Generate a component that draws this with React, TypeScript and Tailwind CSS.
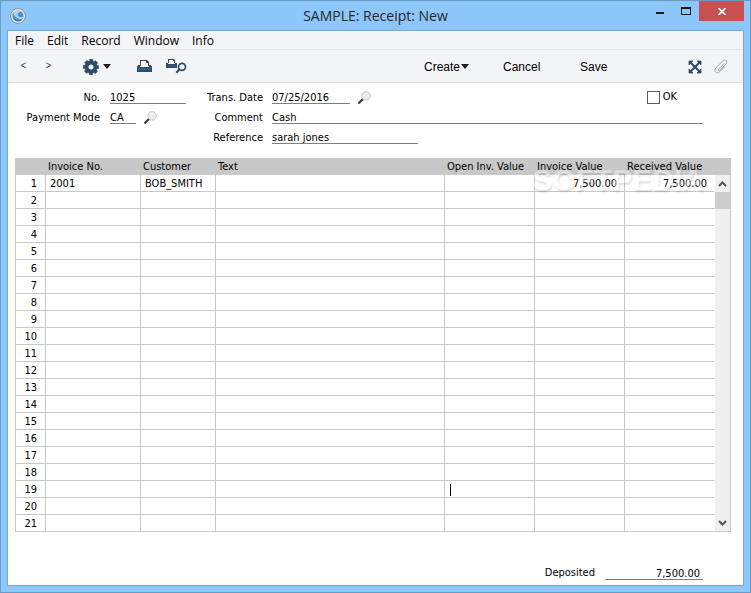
import { useState } from "react";

const MENUS = ["File", "Edit", "Record", "Window", "Info"];

const COLUMNS = ["Invoice No.", "Customer", "Text", "Open Inv. Value", "Invoice Value", "Received Value"];

const ROWS = Array.from({ length: 21 }, (_, i) => ({
  no: i + 1,
  cells: i === 0 ? ["2001", "BOB_SMITH", "", "", "7,500.00", "7,500.00"] : ["", "", "", "", "", ""],
}));

const FIELD = "h-[14px] border-b border-[#808080] bg-transparent p-0 pt-px text-[11px] leading-3 outline-none";

function AppIcon() {
  return (
    <svg width="16" height="16" viewBox="0 0 16 16">
      <circle cx="8" cy="8" r="7.4" fill="#eeebe8" stroke="#8d8782" strokeWidth="0.9" />
      <circle cx="8" cy="8" r="5.6" fill="#4d95cb" />
      <path d="M3.500 5C5 2.600 9 2 11.500 3.800C9 4 7 5 7.500 7C8 9 10.500 10 13.300 8.500C13 10.500 11 11.500 9 11C6 10 4 8 3.500 5Z" fill="#a9d6f2" />
      <path d="M4 11C6 13 10 13.500 12 11.500" stroke="#2f74ad" fill="none" />
    </svg>
  );
}

function Gear() {
  return (
    <svg width="16" height="16" viewBox="0 0 16 16" fill="none" stroke="#2d4b6a">
      <circle cx="8" cy="8" r="4.500" strokeWidth="4" />
      <circle cx="8" cy="8" r="6.700" strokeWidth="2.400" strokeDasharray="3.600 1.662" strokeDashoffset="1.800" />
    </svg>
  );
}

function CaretDown() {
  return (
    <svg width="8" height="5" viewBox="0 0 8 5">
      <path d="M0 0H8L4 5Z" fill="#1d1d1d" />
    </svg>
  );
}

function Printer() {
  return (
    <svg width="15" height="13" viewBox="0 0 15 13">
      <path d="M3 6V0H10L12 2V6H11V3H9V1H4V6Z" fill="#2d4b6a" />
      <path d="M4 1H9V3H11V7H4Z" fill="#f4f5f7" />
      <path d="M1 5H3V7H12V5H14L15 7V12H0V7Z" fill="#2d4b6a" />
      <path d="M1 9H14" stroke="#59718a" />
    </svg>
  );
}

function PrinterSearch() {
  return (
    <svg width="21" height="15" viewBox="0 0 21 15" fill="none">
      <path d="M2 4V0H8L9 1V4H8V2H7V1H3V4Z" fill="#2d4b6a" />
      <path d="M0 4H2V5H9V4H11V9H0Z" fill="#2d4b6a" />
      <path d="M1 7H10" stroke="#59718a" strokeWidth="0.600" />
      <circle cx="16" cy="7.800" r="3.500" stroke="#2d4b6a" strokeWidth="1.700" />
      <path d="M13.500 10.300L10.300 13.700" stroke="#2d4b6a" strokeWidth="2" />
    </svg>
  );
}

function Expand() {
  return (
    <svg width="14" height="14" viewBox="0 0 14 14">
      <path d="M2 2L12 12M12 2L2 12" stroke="#2d4b6a" strokeWidth="1.900" />
      <path d="M1 1H5L1 5ZM13 1H9L13 5ZM1 13H5L1 9ZM13 13H9L13 9Z" fill="#2d4b6a" stroke="#2d4b6a" strokeWidth="0.800" />
      <path d="M7 5L9 7L7 9L5 7Z" fill="#2d4b6a" />
    </svg>
  );
}

function Clip() {
  return (
    <svg width="14" height="15" viewBox="0 0 14 15" fill="none" stroke="#9aa5b1" strokeLinecap="round">
      <path d="M9.800 4.800L4.700 10.200C3.600 11.400 4.800 12.300 5.800 11.300L12 5C14.600 2.200 11.500 -0.600 8.700 2L2 8.800C-1 12 2.500 15.800 5.800 12.700L10.500 8" />
    </svg>
  );
}

function Magnifier() {
  return (
    <svg width="13" height="13" viewBox="0 0 13 13">
      <path d="M5.500 7.500L4 9" stroke="#8a8a8a" strokeWidth="1.500" />
      <path d="M4.500 8.500L1.200 11.800" stroke="#3c3c3c" strokeWidth="2.300" strokeLinecap="round" />
      <circle cx="8" cy="4.800" r="4.200" fill="#ececec" stroke="#c6c6c6" />
      <path d="M5.500 4.500C6 2.800 7.500 2.200 9 2.500" stroke="#ffffff" fill="none" />
    </svg>
  );
}

function Chevron({ up = false }: { up?: boolean }) {
  return (
    <svg width="9" height="6" viewBox="0 0 9 6" fill="none" stroke="#555555" strokeWidth="2">
      <path d={up ? "M1 5L4.500 1.500L8 5" : "M1 1L4.500 4.500L8 1"} />
    </svg>
  );
}

function TitleBar() {
  return (
    <header className="relative -mx-[6px] flex h-[29px] items-center justify-between pr-[6px] pl-[9px]">
      <AppIcon />
      <h1 className="absolute inset-x-0 top-[5px] text-center font-['Open_Sans',sans-serif] text-[14px] leading-5 text-[#262626]">
        SAMPLE: Receipt: New
      </h1>
      <div className="relative flex h-5 self-start">
        <button aria-label="Minimize" className="flex w-[26px] items-center justify-center pt-1">
          <span className="h-[2px] w-2 bg-[#1a1a1a]" />
        </button>
        <button aria-label="Maximize" className="flex w-[26px] items-center justify-center">
          <span className="h-[8px] w-[10px] border border-t-2 border-[#1a1a1a]" />
        </button>
        <button aria-label="Close" className="flex w-[45px] items-center justify-center bg-[#c75050]">
          <svg width="8" height="7" viewBox="0 0 8 7">
            <path d="M0.500 0L7.500 7M7.500 0L0.500 7" stroke="#ffffff" strokeWidth="1.700" />
          </svg>
        </button>
      </div>
    </header>
  );
}

function Toolbar() {
  return (
    <div className="flex h-[33px] items-center justify-between border-b border-[#dcdee0] bg-[#f4f5f7] pt-px pr-[15px] pl-3 font-['Liberation_Sans',sans-serif] text-[12px]">
      <div className="flex items-center">
        <button aria-label="Previous" className="w-[7px] pb-[2px] text-[10px] text-[#2d4b6a]">&lt;</button>
        <button aria-label="Next" className="ml-[18px] w-[7px] pb-[2px] text-[10px] text-[#2d4b6a]">&gt;</button>
        <button aria-label="Operations" className="ml-[31px] flex items-center gap-1">
          <Gear />
          <CaretDown />
        </button>
        <button aria-label="Print" className="ml-[26px]"><Printer /></button>
        <button aria-label="Preview" className="ml-[14px]"><PrinterSearch /></button>
      </div>
      <div className="flex items-center">
        <button className="flex w-[79px] items-center gap-px">
          Create
          <CaretDown />
        </button>
        <button className="w-[77px] text-left">Cancel</button>
        <button className="w-[108px] text-left">Save</button>
        <button aria-label="Expand"><Expand /></button>
        <button aria-label="Attachments" className="ml-3"><Clip /></button>
      </div>
    </div>
  );
}

function ReceiptForm() {
  const [ok, setOk] = useState(false);

  return (
    <form className="grid auto-rows-[20px] grid-cols-[93px_80px_64px_1fr] items-center gap-x-[9px] pt-1 pr-10">
      <label htmlFor="no" className="pt-[2px] pr-px text-right">No.</label>
      <input id="no" defaultValue="1025" className={`${FIELD} w-[76px]`} />
      <label htmlFor="date" className="pt-[2px] text-right whitespace-nowrap">Trans. Date</label>
      <div className="flex items-center">
        <input id="date" defaultValue="07/25/2016" className={`${FIELD} w-[78px]`} />
        <button type="button" aria-label="Pick date" className="ml-2"><Magnifier /></button>
        <label className="mr-[26px] ml-auto flex items-center gap-[3px]">
          <input
            type="checkbox"
            checked={ok}
            onChange={() => setOk(!ok)}
            className="size-[13px] appearance-none border border-[#5c5c5c] bg-white checked:bg-[#5c5c5c]"
          />
          <span className="pt-px">OK</span>
        </label>
      </div>

      <label htmlFor="mode" className="pt-[2px] pr-px text-right whitespace-nowrap">Payment Mode</label>
      <div className="flex items-center">
        <input id="mode" defaultValue="CA" className={`${FIELD} w-[26px]`} />
        <button type="button" aria-label="Pick payment mode" className="ml-2"><Magnifier /></button>
      </div>
      <label htmlFor="comment" className="pt-[2px] text-right">Comment</label>
      <input id="comment" defaultValue="Cash" className={`${FIELD} w-full`} />

      <label htmlFor="reference" className="col-start-3 pt-[2px] text-right">Reference</label>
      <input id="reference" defaultValue="sarah jones" className={`${FIELD} w-[146px]`} />
    </form>
  );
}

function InvoiceTable() {
  return (
    <div className="relative mt-[11px] mr-3 ml-[7px] flex">
      <table className="flex-1 table-fixed border-separate border-spacing-0 leading-[15px]">
        <colgroup>
          <col className="w-[31px]" />
          <col className="w-[95px]" />
          <col className="w-[75px]" />
          <col />
          <col className="w-[90px]" />
          <col className="w-[90px]" />
          <col className="w-[90px]" />
        </colgroup>
        <thead>
          <tr className="h-[17px] bg-[#c8c8c8]">
            <th className="p-0" />
            {COLUMNS.map((name) => (
              <th key={name} className="p-0 pl-[2px] text-left font-normal whitespace-nowrap">{name}</th>
            ))}
          </tr>
        </thead>
        <tbody>
          {ROWS.map((row) => (
            <tr key={row.no} className="h-[17px]">
              <td className="border-x border-b border-[#c8c8c8] p-0 pt-px pr-2 text-right">{row.no}</td>
              {row.cells.map((cell, i) => (
                <td
                  key={i}
                  className={`border-r border-b border-[#c8c8c8] p-0 pt-px ${i < 5 ? "" : "border-r-white"} ${i > 2 ? "pr-[7px] text-right" : "pl-1"}`}
                >
                  {cell}
                  {/* text cursor */}
                  {row.no === 19 && i === 3 && <span className="ml-[5px] block h-3 w-px bg-black" />}
                </td>
              ))}
            </tr>
          ))}
        </tbody>
      </table>
      <div className="flex w-4 flex-col">
        <div className="h-[17px] bg-[#c8c8c8]" />
        <div className="flex flex-1 flex-col border-r border-b border-[#c8c8c8] bg-[#f0f0f0]">
          <button aria-label="Scroll up" className="flex h-[17px] items-center justify-center"><Chevron up /></button>
          <div className="h-[17px] bg-[#cdcdcd]" />
          <button aria-label="Scroll down" className="mt-auto flex h-[17px] items-center justify-center"><Chevron /></button>
        </div>
      </div>
      <span className="pointer-events-none absolute top-[6px] right-[27px] font-['Liberation_Sans',sans-serif] text-[30px] leading-8 font-bold text-white opacity-35 [text-shadow:1px_2px_2px_rgba(0,0,0,0.35)]">
        SOFTPEDIA
      </span>
    </div>
  );
}

export default function App() {
  return (
    <div className="flex min-h-screen flex-col border border-[#6b9ac4] bg-[#8dc6fa] px-[6px] pb-[6px] text-[11px] text-black">
      <TitleBar />
      <main className="flex flex-1 flex-col border border-[#76a9d6] bg-white font-['DejaVu_Sans_Condensed','DejaVu_Sans',sans-serif]">
        <nav className="flex h-[19px] items-center gap-[13px] border-b border-[#e2e4e6] bg-[#f4f5f7] pt-px pl-[7px] font-['Open_Sans',sans-serif] text-[12px]">
          {MENUS.map((menu) => (
            <button key={menu}>{menu}</button>
          ))}
        </nav>
        <Toolbar />
        <ReceiptForm />
        <InvoiceTable />
        <div className="mt-[33px] flex items-center justify-end gap-[10px] pr-10">
          <label htmlFor="deposited">Deposited</label>
          <input id="deposited" defaultValue="7,500.00" className={`${FIELD} w-[98px] pr-[3px] text-right`} />
        </div>
      </main>
    </div>
  );
}
